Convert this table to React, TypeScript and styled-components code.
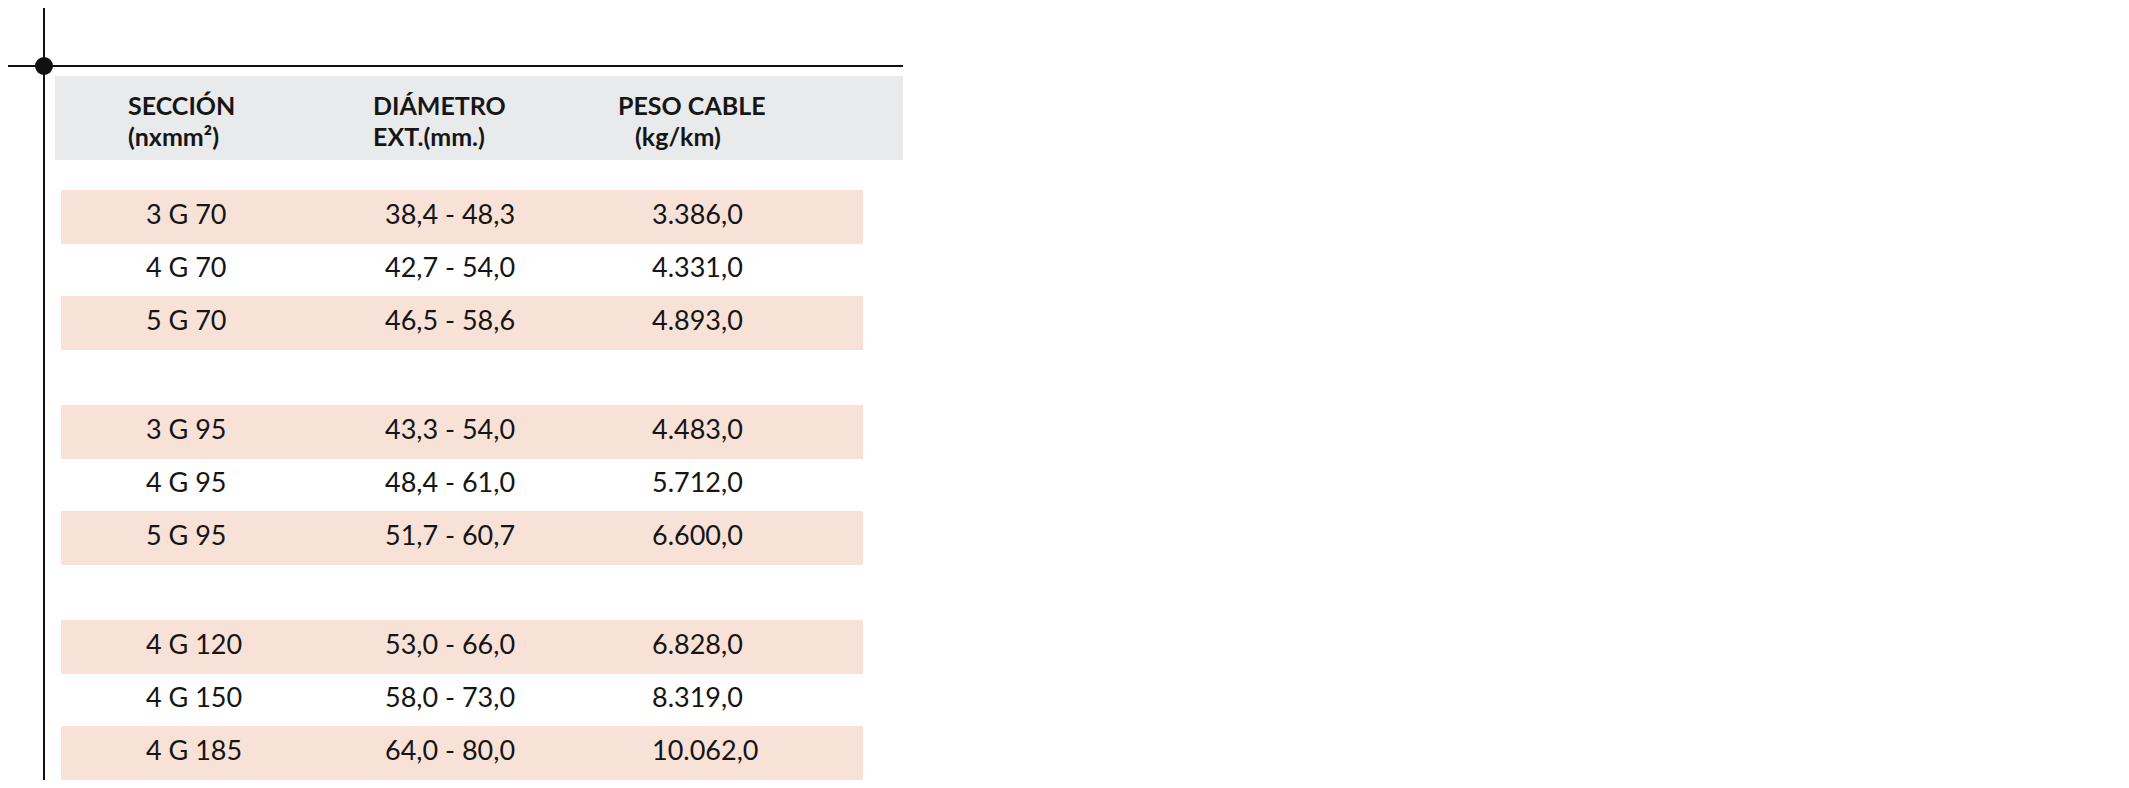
import React from 'react';
import styled, { createGlobalStyle } from 'styled-components';

const GlobalStyle = createGlobalStyle`
  body {
    margin: 0;
    background: #ffffff;
    font-family: Lato, 'Liberation Sans', sans-serif;
    color: #151515;
  }
`;

const Frame = styled.div`
  margin: 8px 0 0 43px;
  width: 860px;
  border-left: 2px solid #111;
  padding-top: 57px;
`;

const Rule = styled.div`
  position: relative;
  margin-left: -37px;
  width: 895px;
  height: 2px;
  background: #111;

  &::before {
    content: '';
    position: absolute;
    left: 27px;
    top: -8px;
    width: 18px;
    height: 18px;
    border-radius: 50%;
    background: #111;
  }
`;

const HeaderBand = styled.div`
  margin: 9px 0 0 10px;
  width: 848px;
  height: 84px;
  box-sizing: border-box;
  padding: 14px 0 0 73px;
  background: #e8eaeb;
  display: grid;
  grid-template-columns: 245px 245px 1fr;
`;

const HeaderCell = styled.div`
  display: flex;
  flex-direction: column;
  font-weight: 700;
  font-size: 25px;
  line-height: 31px;
  color: #161616;
`;

const HeaderLine = styled.span<{ $indent?: number }>`
  padding-left: ${p => p.$indent || 0}px;
  white-space: nowrap;
`;

const Body = styled.div`
  margin: 30px 0 0 16px;
  width: 802px;
  display: flex;
  flex-direction: column;
`;

const Row = styled.div<{ $shade?: boolean }>`
  height: ${p => (p.$shade ? 54 : 52)}px;
  box-sizing: border-box;
  padding: 0 0 8px 85px;
  display: grid;
  grid-template-columns: 239px 267px 1fr;
  align-items: center;
  background: ${p => (p.$shade ? '#f8e2d8' : 'transparent')};
`;

const GroupGap = styled.div`
  height: 55px;
`;

const Cell = styled.div`
  font-size: 27px;
  white-space: nowrap;
  color: #151515;
`;

const groups = [
  [
    ['3 G 70', '38,4 - 48,3', '3.386,0'],
    ['4 G 70', '42,7 - 54,0', '4.331,0'],
    ['5 G 70', '46,5 - 58,6', '4.893,0'],
  ],
  [
    ['3 G 95', '43,3 - 54,0', '4.483,0'],
    ['4 G 95', '48,4 - 61,0', '5.712,0'],
    ['5 G 95', '51,7 - 60,7', '6.600,0'],
  ],
  [
    ['4 G 120', '53,0 - 66,0', '6.828,0'],
    ['4 G 150', '58,0 - 73,0', '8.319,0'],
    ['4 G 185', '64,0 - 80,0', '10.062,0'],
  ],
];

const App: React.FC = () => {
  return (
    <>
      <GlobalStyle />
      <Frame>
        <Rule />
        <HeaderBand>
          <HeaderCell>
            <HeaderLine>SECCIÓN</HeaderLine>
            <HeaderLine>(nxmm²)</HeaderLine>
          </HeaderCell>
          <HeaderCell>
            <HeaderLine>DIÁMETRO</HeaderLine>
            <HeaderLine>EXT.(mm.)</HeaderLine>
          </HeaderCell>
          <HeaderCell>
            <HeaderLine>PESO CABLE</HeaderLine>
            <HeaderLine $indent={17}>(kg/km)</HeaderLine>
          </HeaderCell>
        </HeaderBand>
        <Body>
          {groups.map((group, gi) => (
            <React.Fragment key={gi}>
              {gi > 0 && <GroupGap />}
              {group.map((item, ri) => (
                <Row key={item[0]} $shade={ri !== 1}>
                  <Cell>{item[0]}</Cell>
                  <Cell>{item[1]}</Cell>
                  <Cell>{item[2]}</Cell>
                </Row>
              ))}
            </React.Fragment>
          ))}
        </Body>
      </Frame>
    </>
  );
};

export default App;
